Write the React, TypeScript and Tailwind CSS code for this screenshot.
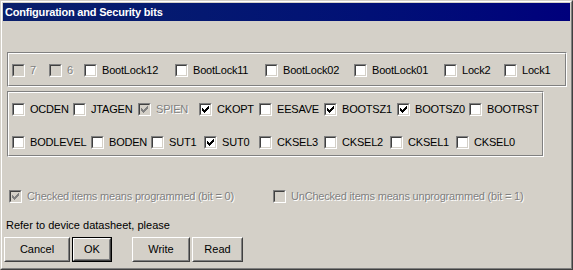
import React from 'react';

type Bit = { label: string; w?: number; checked?: boolean; disabled?: boolean };

const row1: Bit[] = [
  { label: '7', w: 37, disabled: true },
  { label: '6', w: 35, disabled: true },
  { label: 'BootLock12', w: 91 },
  { label: 'BootLock11', w: 90 },
  { label: 'BootLock02', w: 89 },
  { label: 'BootLock01', w: 90 },
  { label: 'Lock2', w: 60 },
  { label: 'Lock1' },
];

const row2: Bit[] = [
  { label: 'OCDEN', w: 61 },
  { label: 'JTAGEN', w: 65 },
  { label: 'SPIEN', w: 61, checked: true, disabled: true },
  { label: 'CKOPT', w: 60, checked: true },
  { label: 'EESAVE', w: 65 },
  { label: 'BOOTSZ1', w: 73, checked: true },
  { label: 'BOOTSZ0', w: 72, checked: true },
  { label: 'BOOTRST' },
];

const row3: Bit[] = [
  { label: 'BODLEVEL', w: 79 },
  { label: 'BODEN', w: 60 },
  { label: 'SUT1', w: 53 },
  { label: 'SUT0', w: 55, checked: true },
  { label: 'CKSEL3', w: 65 },
  { label: 'CKSEL2', w: 66 },
  { label: 'CKSEL1', w: 66 },
  { label: 'CKSEL0' },
];

// classic 7x7 check glyph
const tick = [
  [6, 0], [5, 1], [6, 1], [0, 2], [4, 2], [5, 2], [6, 2],
  [0, 3], [1, 3], [3, 3], [4, 3], [5, 3], [0, 4], [1, 4], [2, 4], [3, 4], [4, 4],
  [1, 5], [2, 5], [3, 5], [2, 6],
];

function Box({ checked, disabled }: { checked?: boolean; disabled?: boolean }) {
  return (
    <div className="w-[13px] h-[13px] shrink-0 border border-t-[#808080] border-l-[#808080] border-b-white border-r-white">
      <div
        className={`w-[11px] h-[11px] border border-t-[#404040] border-l-[#404040] border-b-[#d4d0c8] border-r-[#d4d0c8] ${
          disabled ? 'bg-[#d4d0c8]' : 'bg-white'
        }`}
      >
        {checked && (
          <svg width="9" height="9" viewBox="0 0 9 9" shapeRendering="crispEdges" className="block">
            {tick.map(([x, y]) => (
              <rect key={`${x}-${y}`} x={x + 1} y={y + 1} width="1" height="1" fill={disabled ? '#808080' : '#000'} />
            ))}
          </svg>
        )}
      </div>
    </div>
  );
}

function Check({ bit }: { bit: Bit }) {
  return (
    <div className="flex items-center shrink-0" style={bit.w ? { width: bit.w } : undefined}>
      <Box checked={bit.checked} disabled={bit.disabled} />
      <span
        className={`ml-[5px] leading-[13px] whitespace-nowrap tracking-[-0.2px] ${
          bit.disabled ? 'text-[#808080] [text-shadow:1px_1px_0_#fff]' : 'text-black'
        }`}
      >
        {bit.label}
      </span>
    </div>
  );
}

function Group({ width, children }: { width: number; children: React.ReactNode }) {
  return (
    <div
      className="ml-[4px] border border-t-[#808080] border-l-[#808080] border-b-white border-r-white"
      style={{ width }}
    >
      <div className="border border-t-white border-l-white border-b-[#808080] border-r-[#808080] pl-[3px]">
        {children}
      </div>
    </div>
  );
}

function Button({ label, w, isDefault }: { label: string; w: number; isDefault?: boolean }) {
  return (
    <div className={`h-[25px] shrink-0 ${isDefault ? 'border border-black' : ''}`} style={{ width: w }}>
      <div className="h-full border border-t-white border-l-white border-b-[#404040] border-r-[#404040]">
        <div className="h-full border border-t-[#d4d0c8] border-l-[#d4d0c8] border-b-[#808080] border-r-[#808080] flex items-center justify-center">
          {label}
        </div>
      </div>
    </div>
  );
}

export default function App() {
  return (
    <div
      className="w-[573px] h-[270px] bg-[#d4d0c8] text-[11px] text-black border border-t-[#d4d0c8] border-l-[#d4d0c8] border-b-[#404040] border-r-[#404040]"
      style={{ fontFamily: '"Liberation Sans", Arial, sans-serif' }}
    >
      <div className="h-full border border-t-white border-l-white border-b-[#808080] border-r-[#808080] p-px flex flex-col">
        <div className="h-[18px] shrink-0 bg-gradient-to-r from-[#0a1f6b] to-[#00007c] flex items-center pl-[2px]">
          <span className="text-white font-bold text-[11px] leading-none tracking-[-0.2px]">
            Configuration and Security bits
          </span>
        </div>

        <div className="mt-[31px]">
          <Group width={560}>
            <div className="flex pt-[10px] pb-[8px]">
              {row1.map((b) => (
                <Check key={b.label} bit={b} />
              ))}
            </div>
          </Group>
        </div>

        <div className="mt-[4px]">
          <Group width={537}>
            <div className="flex flex-col gap-[20px] pt-[10px] pb-[6px]">
              <div className="flex">
                {row2.map((b) => (
                  <Check key={b.label} bit={b} />
                ))}
              </div>
              <div className="flex">
                {row3.map((b) => (
                  <Check key={b.label} bit={b} />
                ))}
              </div>
            </div>
          </Group>
        </div>

        <div className="flex mt-[33px] ml-[6px]">
          <Check bit={{ label: 'Checked items means programmed (bit = 0)', w: 264, checked: true, disabled: true }} />
          <Check bit={{ label: 'UnChecked items means unprogrammed (bit = 1)', disabled: true }} />
        </div>

        <div className="mt-[16px] ml-[3px] leading-[13px]">Refer to device datasheet, please</div>

        <div className="flex mt-[5px] ml-[1px]">
          <Button label="Cancel" w={66} />
          <div className="ml-[2px]">
            <Button label="OK" w={40} isDefault />
          </div>
          <div className="ml-[20px]">
            <Button label="Write" w={58} />
          </div>
          <div className="ml-[2px]">
            <Button label="Read" w={51} />
          </div>
        </div>
      </div>
    </div>
  );
}
